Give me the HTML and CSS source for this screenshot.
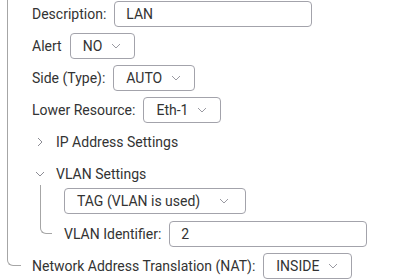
FILE: index.html
```html
<!DOCTYPE html>
<html lang="en">
  <head>
    <meta charset="UTF-8" />
    <meta name="viewport" content="width=device-width, initial-scale=1.0" />
    <title>Interface Settings</title>
    <link rel="stylesheet" href="styles.css">
  </head>
  <body>
    <div class="tree">
      <div class="field">
        <span class="field-label">Description:</span>
        <div class="text-input text-input-wide">LAN</div>
      </div>
      <div class="field">
        <span class="field-label">Alert</span>
        <div class="select">
          <span>NO</span>
          <svg class="chevron" viewBox="0 0 10 6"><path d="M1 1l4 4 4-4" /></svg>
        </div>
      </div>
      <div class="field">
        <span class="field-label">Side (Type):</span>
        <div class="select">
          <span>AUTO</span>
          <svg class="chevron" viewBox="0 0 10 6"><path d="M1 1l4 4 4-4" /></svg>
        </div>
      </div>
      <div class="field">
        <span class="field-label">Lower Resource:</span>
        <div class="select">
          <span>Eth-1</span>
          <svg class="chevron" viewBox="0 0 10 6"><path d="M1 1l4 4 4-4" /></svg>
        </div>
      </div>
      <div class="section">
        <div class="section-header">
          <svg class="toggle" viewBox="0 0 16 16"><path d="M6 4l4 4-4 4" /></svg>
          <span>IP Address Settings</span>
        </div>
      </div>
      <div class="section">
        <div class="section-header">
          <svg class="toggle" viewBox="0 0 16 16"><path d="M4 6l4 4 4-4" /></svg>
          <span>VLAN Settings</span>
        </div>
        <div class="subtree">
          <div class="field">
            <div class="select select-wide">
              <span>TAG (VLAN is used)</span>
              <svg class="chevron" viewBox="0 0 10 6"><path d="M1 1l4 4 4-4" /></svg>
            </div>
          </div>
          <div class="field">
            <span class="field-label">VLAN Identifier:</span>
            <div class="text-input text-input-wide">2</div>
          </div>
        </div>
      </div>
      <div class="field">
        <span class="field-label">Network Address Translation (NAT):</span>
        <div class="select">
          <span>INSIDE</span>
          <svg class="chevron" viewBox="0 0 10 6"><path d="M1 1l4 4 4-4" /></svg>
        </div>
      </div>
    </div>
  </body>
</html>
```

FILE: styles.css
```css
*,
*::before,
*::after {
  box-sizing: border-box;
}

body {
  margin: 0;
  font-family: Roboto, "Liberation Sans", sans-serif;
  font-size: 14px;
  color: #333;
  background-color: #fff;
  overflow: hidden;
}

/* tree lines */
.tree,
.subtree {
  position: relative;
  display: flex;
  flex-direction: column;
  gap: 6px;
}

.tree {
  margin-left: 7px;
  padding: 1px 0 0 25px;
}

.tree::before,
.subtree::before {
  content: "";
  position: absolute;
  left: 0;
  border-left: 1px solid #a6a6a6;
  border-bottom: 1px solid #a6a6a6;
  border-bottom-left-radius: 6px;
}

.tree::before {
  top: 0;
  width: 14px;
  bottom: 13px;
}

.subtree {
  gap: 7px;
  margin-left: 8px;
  padding-left: 24px;
}

.subtree::before {
  top: -3px;
  width: 12px;
  bottom: 13px;
}

.field {
  display: flex;
  align-items: center;
  gap: 8px;
  height: 26px;
}

.field-label {
  white-space: nowrap;
}

.text-input,
.select {
  display: flex;
  align-items: center;
  height: 26px;
  border: 1px solid #a3a3ab;
  border-radius: 4px;
  color: #333;
}

.text-input {
  padding: 0 11px;
}

.text-input-wide {
  width: 198px;
}

.select {
  gap: 9px;
  padding: 0 13px 0 12px;
}

.select-wide {
  width: 182px;
  justify-content: space-between;
  padding-right: 16px;
}

.chevron {
  width: 10px;
  height: 6px;
  fill: none;
  stroke: #9a9aa2;
  stroke-width: 1;
}

.section {
  display: flex;
  flex-direction: column;
  gap: 1px;
}

.section-header {
  display: flex;
  align-items: center;
  gap: 8px;
  height: 26px;
}

.toggle {
  width: 16px;
  height: 16px;
  fill: none;
  stroke: #8c8c94;
  stroke-width: 1;
}
```
